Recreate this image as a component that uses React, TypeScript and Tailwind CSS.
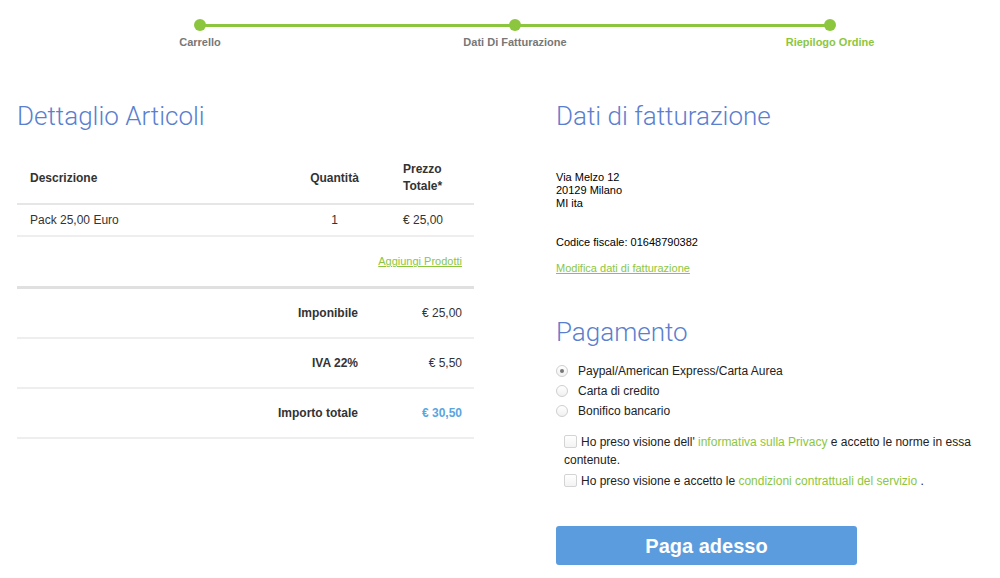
import React from "react";

const green = "text-[#8cc63f]";

function Stepper() {
  const steps = [
    { label: "Carrello", active: false },
    { label: "Dati Di Fatturazione", active: false },
    { label: "Riepilogo Ordine", active: true },
  ];
  return (
    <div className="relative mx-auto h-[60px] w-[630px] pt-[19px]">
      <div className="absolute left-0 right-0 top-[24px] h-[3px] bg-[#8cc63f]" />
      <div className="relative flex justify-between">
        {steps.map((s) => (
          <div key={s.label} className="flex w-0 flex-col items-center">
            <span className="h-[12px] w-[12px] shrink-0 rounded-full bg-[#8cc63f]" />
            <span
              className={`mt-[5px] whitespace-nowrap text-[11px] font-bold leading-[12px] ${
                s.active ? green : "text-[#777]"
              }`}
            >
              {s.label}
            </span>
          </div>
        ))}
      </div>
    </div>
  );
}

function Heading({ children }: { children: React.ReactNode }) {
  return (
    <h2 className="font-['Roboto',sans-serif] text-[26px] font-light leading-[32px] text-[#5a7fcf]">
      {children}
    </h2>
  );
}

function ArticleDetail() {
  return (
    <div className="w-[457px]">
      <Heading>Dettaglio Articoli</Heading>
      <div className="mt-[20px] text-[12px] text-[#333]">
        <div className="grid h-[53px] grid-cols-[261px_113px_83px] items-center border-b-2 border-[#e6e6e6] font-bold">
          <div className="pl-[13px]">Descrizione</div>
          <div className="text-center">Quantità</div>
          <div className="pl-[12px] leading-[17px]">
            Prezzo
            <br />
            Totale*
          </div>
        </div>
        <div className="grid h-[32px] grid-cols-[261px_113px_83px] items-center border-b-2 border-[#eeeeee]">
          <div className="pl-[13px]">Pack 25,00 Euro</div>
          <div className="text-center">1</div>
          <div className="pl-[12px]">€ 25,00</div>
        </div>
        <div className="flex h-[49px] items-center justify-end pr-[12px]">
          <a className={`text-[11px] underline ${green}`}>Aggiungi Prodotti</a>
        </div>
        <div className="border-t-[3px] border-[#e0e0e0]">
          {[
            ["Imponibile", "€ 25,00", false],
            ["IVA 22%", "€ 5,50", false],
            ["Importo totale", "€ 30,50", true],
          ].map(([label, value, total]) => (
            <div
              key={label as string}
              className="grid h-[50px] grid-cols-[341px_116px] items-center border-b-2 border-[#eeeeee]"
            >
              <div className="text-right font-bold">{label}</div>
              <div className={`pr-[12px] text-right ${total ? "font-bold text-[#5aa5e0]" : ""}`}>{value}</div>
            </div>
          ))}
        </div>
      </div>
    </div>
  );
}

function Radio({ checked, label }: { checked?: boolean; label: string }) {
  return (
    <label className="flex h-[20px] items-center gap-[10px]">
      <span className="flex h-[12px] w-[12px] items-center justify-center rounded-full border border-[#cfcfcf] bg-gradient-to-b from-white to-[#f0f0f0]">
        {checked && <span className="h-[4px] w-[4px] rounded-full bg-[#777]" />}
      </span>
      <span>{label}</span>
    </label>
  );
}

function Box() {
  return (
    <span className="mr-[4px] inline-block h-[13px] w-[13px] translate-y-[2px] rounded-[2px] border border-[#d4d4d4] bg-gradient-to-b from-white to-[#f3f3f3]" />
  );
}

function Billing() {
  return (
    <div className="w-[420px]">
      <Heading>Dati di fatturazione</Heading>
      <div className="mt-[39px] text-[11px] leading-[13px] text-black">
        <div>Via Melzo 12</div>
        <div>20129 Milano</div>
        <div>MI ita</div>
        <div className="mt-[26px]">Codice fiscale: 01648790382</div>
        <a className={`mt-[13px] block underline ${green}`}>Modifica dati di fatturazione</a>
      </div>
      <div className="mt-[41px]">
        <Heading>Pagamento</Heading>
      </div>
      <div className="mt-[13px] text-[12px] text-[#222]">
        <Radio checked label="Paypal/American Express/Carta Aurea" />
        <Radio label="Carta di credito" />
        <Radio label="Bonifico bancario" />
      </div>
      <div className="mt-[12px] pl-[8px] text-[12px] leading-[18px] text-[#222]">
        <p>
          <Box />
          Ho preso visione dell' <a className={green}>informativa sulla Privacy</a> e accetto le norme in essa
          contenute.
        </p>
        <p className="mt-[3px]">
          <Box />
          Ho preso visione e accetto le <a className={green}>condizioni contrattuali del servizio</a> .
        </p>
      </div>
      <button className="mt-[36px] h-[39px] w-[301px] rounded-[3px] bg-[#5b9cde] text-[20px] font-bold text-white">
        Paga adesso
      </button>
    </div>
  );
}

export default function App() {
  return (
    <div className="h-[578px] w-[1000px] overflow-hidden bg-white font-['Liberation_Sans',Arial,sans-serif]">
      <div className="pl-[200px] pr-[170px]">
        <Stepper />
      </div>
      <div className="mt-[40px] flex pl-[17px]">
        <ArticleDetail />
        <div className="ml-[82px]">
          <Billing />
        </div>
      </div>
    </div>
  );
}
